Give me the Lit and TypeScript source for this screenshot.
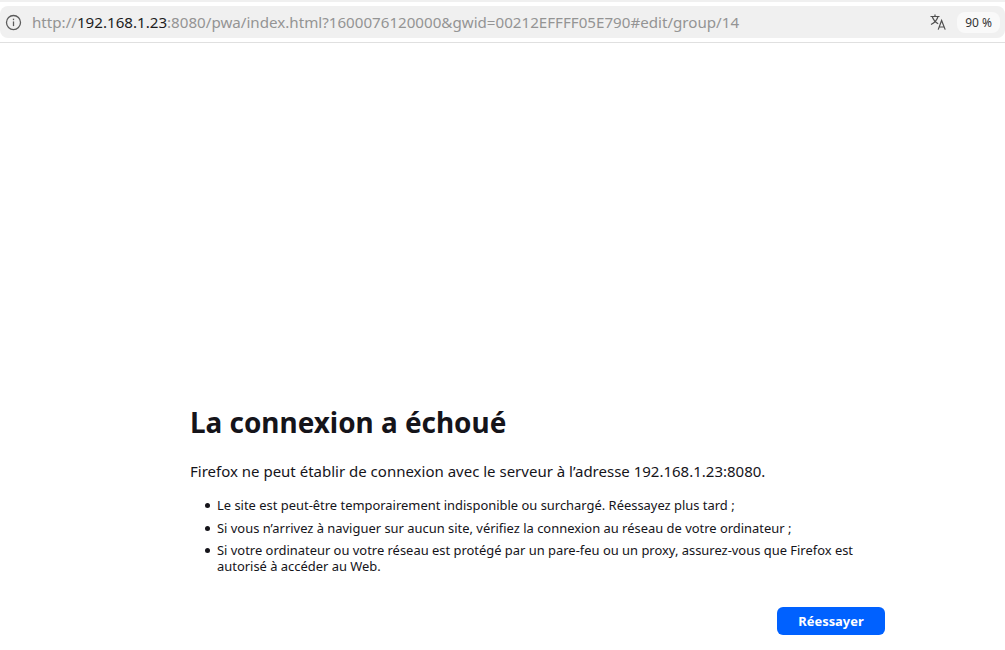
import { LitElement, html, css } from "lit";
import { customElement } from "lit/decorators.js";

@customElement("app-root")
export class AppRoot extends LitElement {
  static styles = css`
    :host { display: block; width: 1005px; height: 650px; background: #fff; overflow: hidden; font-family: "Noto Sans", "Open Sans", sans-serif; color: #15141a; }
    .top { height: 2px; background: #f0f0f0; }
    .chrome { padding: 4px 0 4px; border-bottom: 1px solid #e0e0e0; }
    .urlbar { height: 32px; background: #f0f0f0; border-radius: 8px; display: flex; align-items: center; padding: 0 5px 0 5px; }
    .info { width: 17px; height: 17px; color: #5b5b5b; }
    .url { margin-left: 10px; flex: 1; font-size: 15.15px; color: #949494; white-space: nowrap; }
    .url b { font-weight: 400; color: #1d1d1d; }
    .tr { width: 16px; height: 16px; color: #4f4f4f; margin-right: 11px; }
    .zoom { background: #f9f9f9; border-radius: 8px; font-size: 12px; line-height: 15px; color: #333; padding: 3px 8px; }
    main { margin-left: 190px; width: 680px; padding-top: 360px; }
    h1 { margin: 0; font-size: 27.9px; line-height: 38px; font-weight: 700; }
    .lead { margin: 20px 0 0; font-size: 15px; line-height: 20px; }
    ul { margin: 16px 0 0; padding: 0 0 0 15px; font-size: 12.93px; line-height: 16px; list-style: none; }
    li { margin-bottom: 6.5px; display: flex; }
    li::before { content: ""; flex: none; width: 5px; height: 5px; border-radius: 50%; background: #15141a; margin: 6px 7px 0 0; }
    .actions { display: flex; justify-content: flex-end; width: 695px; margin-top: 32.5px; }
    button { width: 108px; height: 28px; border: 0; border-radius: 6px; background: #0061ff; color: #fff; font: 700 12.9px "Noto Sans", sans-serif; padding: 0; }
  `;
  render() {
    return html`
      <div class="top"></div>
      <div class="chrome">
        <div class="urlbar">
          <svg class="info" viewBox="0 0 16 16" fill="none" stroke="currentColor" stroke-width="1.2"><circle cx="8" cy="8" r="6.6"/><path d="M8 7v4.4"/><path d="M8 4.4v1.4"/></svg>
          <div class="url">http://<b>192.168.1.23</b>:8080/pwa/index.html?1600076120000&amp;gwid=00212EFFFF05E790#edit/group/14</div>
          <svg class="tr" viewBox="0 0 16 16" fill="none" stroke="currentColor" stroke-width="1.2"><path d="M0.5 2.5h9M5 .5v2M8 2.5C7 6 4 9 1 10.5M2.2 2.5C3.4 6 5.8 8.5 8.2 9.7"/><path d="M8.2 15.6 11.6 6.5l3.6 9.1M9.3 13h4.8"/></svg>
          <div class="zoom">90 %</div>
        </div>
      </div>
      <main>
        <h1>La connexion a échoué</h1>
        <p class="lead">Firefox ne peut établir de connexion avec le serveur à l’adresse 192.168.1.23:8080.</p>
        <ul>
          <li>Le site est peut-être temporairement indisponible ou surchargé. Réessayez plus tard ;</li>
          <li>Si vous n’arrivez à naviguer sur aucun site, vérifiez la connexion au réseau de votre ordinateur ;</li>
          <li>Si votre ordinateur ou votre réseau est protégé par un pare-feu ou un proxy, assurez-vous que Firefox est autorisé à accéder au Web.</li>
        </ul>
        <div class="actions"><button>Réessayer</button></div>
      </main>
    `;
  }
}
